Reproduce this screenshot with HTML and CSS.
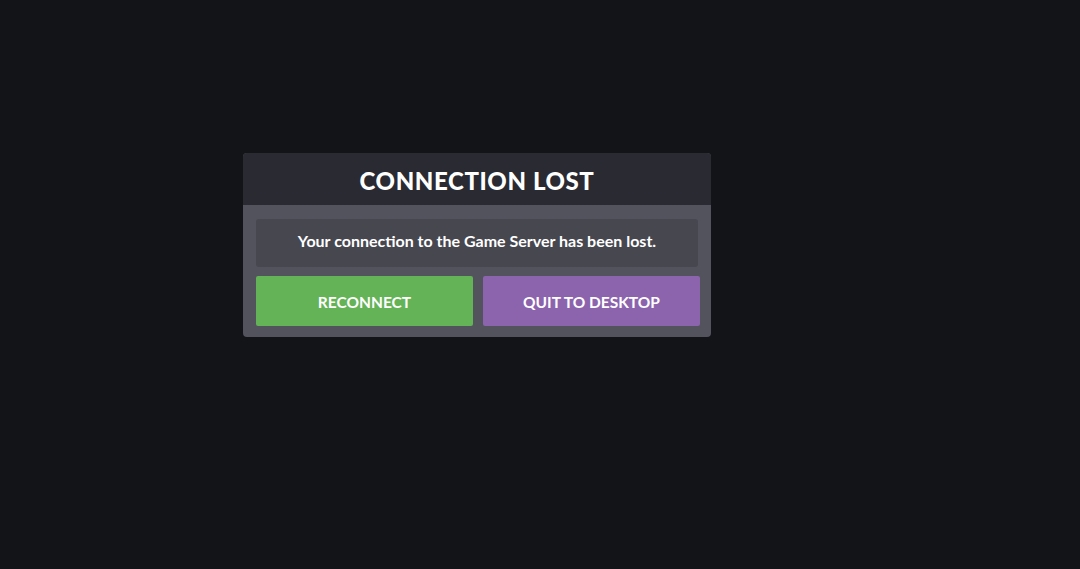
FILE: index.html
```html
<!DOCTYPE html>
<html>
<head>
<meta charset="utf-8">
<link rel="stylesheet" href="styles.css">
</head>
<body>
<div class="dialog">
  <div class="dialog-header">CONNECTION LOST</div>
  <div class="dialog-body">
    <div class="message">Your connection to the Game Server has been lost.</div>
    <div class="actions">
      <div class="btn btn-green">RECONNECT</div>
      <div class="btn btn-purple">QUIT TO DESKTOP</div>
    </div>
  </div>
</div>
</body>
</html>
```
FILE: styles.css
```css
html, body {
  margin: 0;
  height: 100%;
}
body {
  background: #131418;
  font-family: Lato, "Noto Sans", sans-serif;
  color: #ffffff;
  padding: 153px 0 0 243px;
  box-sizing: border-box;
}
.dialog {
  width: 468px;
  border-radius: 4px;
  overflow: hidden;
  background: #52535c;
}
.dialog-header {
  height: 52px;
  padding-top: 2px;
  box-sizing: border-box;
  background: #2a2a32;
  display: flex;
  align-items: center;
  justify-content: center;
  font-size: 24px;
  font-weight: 900;
  letter-spacing: 0.6px;
}
.dialog-body {
  padding: 14px 11px 11px 13px;
  display: flex;
  flex-direction: column;
  gap: 9px;
}
.message {
  height: 48px;
  padding-bottom: 5px;
  box-sizing: border-box;
  margin-right: 2px;
  background: #474750;
  border-radius: 3px;
  display: flex;
  align-items: center;
  justify-content: center;
  font-size: 16px;
  font-weight: 700;
}
.actions {
  display: flex;
  gap: 10px;
}
.btn {
  flex: 1;
  height: 50px;
  padding-top: 2px;
  box-sizing: border-box;
  border-radius: 2px;
  display: flex;
  align-items: center;
  justify-content: center;
  font-size: 15.5px;
  font-weight: 700;
}
.btn-green {
  background: #64b356;
}
.btn-purple {
  background: #8b64ad;
}
```
